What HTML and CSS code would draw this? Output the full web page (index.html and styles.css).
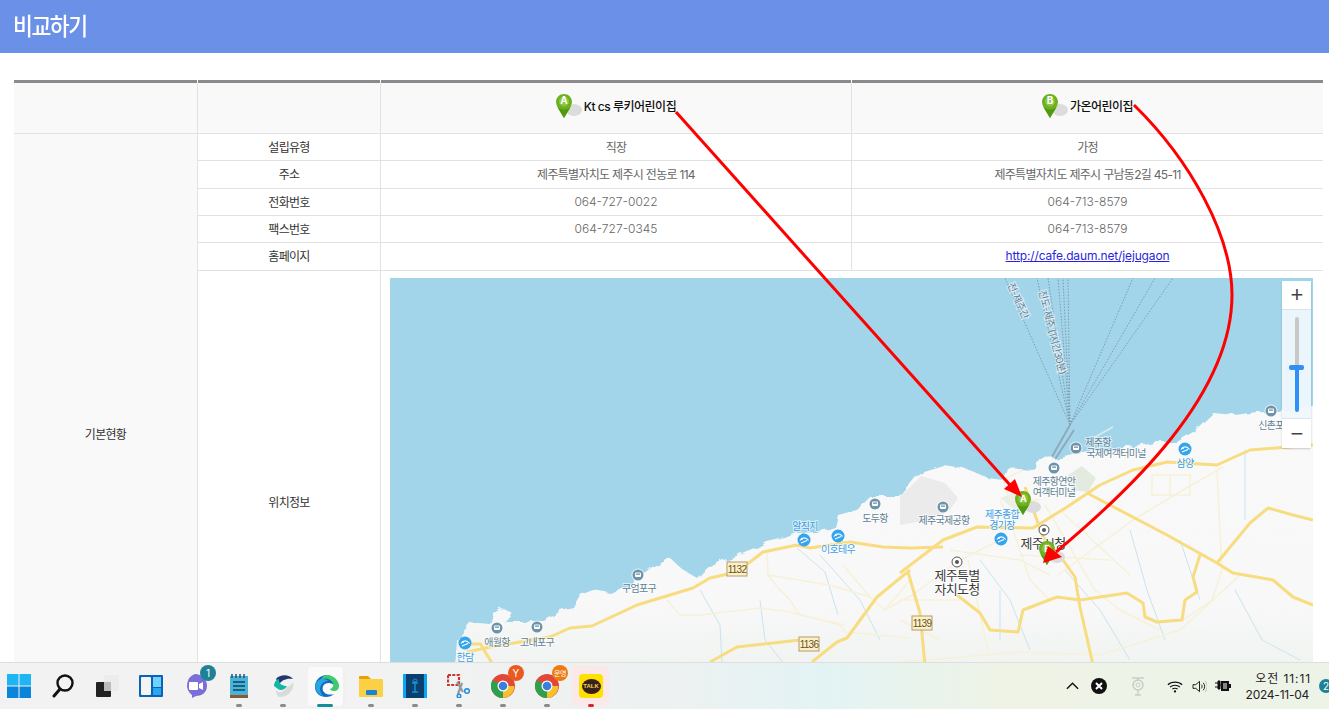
FILE: index.html
```html
<!DOCTYPE html>
<html lang="ko">
<head>
<meta charset="utf-8">
<title>비교하기</title>
<link rel="stylesheet" href="styles.css">
</head>
<body>
<svg class="defs" width="0" height="0" aria-hidden="true">
  <defs>
    <symbol id="pin" viewBox="0 0 26 24">
      <ellipse cx="18" cy="16" rx="8" ry="6" fill="#dcdcdc"/>
      <path d="M8 0C3.6 0 0 3.4 0 7.8 0 12.500 5 19 8 24c3-5 8-11.500 8-16.200C16 3.400 12.400 0 8 0z" fill="#6fb01f"/>
      <path d="M8 24C6 20 3.500 17 2 13.500 6 16 10 16 14 13.500 12.500 17 10 20 8 24z" fill="#4f9a12"/>
      <circle cx="8" cy="7.500" r="5" fill="#8cc63f"/>
    </symbol>
    <symbol id="chrome" viewBox="0 0 24 24">
      <circle cx="12" cy="12" r="12" fill="#e2483a"/>
      <path d="M12 12 1.600 6A12 12 0 0 0 12 24l5-8z" fill="#2f9e4d"/>
      <path d="M12 12h11.400A12 12 0 0 1 12 24z" fill="#f5c22e"/>
      <circle cx="12" cy="12" r="5.500" fill="#fff"/>
      <circle cx="12" cy="12" r="4.300" fill="#3a7fe0"/>
    </symbol>
    <symbol id="harbor" viewBox="0 0 14 14">
      <circle cx="7" cy="7" r="6.500" fill="#fff" opacity=".7"/>
      <circle cx="7" cy="7" r="5.500" fill="#6f93a8"/>
      <rect x="4" y="4.500" width="6" height="4.500" rx="1" fill="#fff"/>
      <rect x="5" y="5.500" width="4" height="1.300" fill="#6f93a8"/>
    </symbol>
    <symbol id="beach" viewBox="0 0 14 14">
      <circle cx="7" cy="7" r="6.500" fill="#35a4ee"/>
      <path d="M3 7.500C5 4 9 4 11.500 7.500M4 10l6-2.500" stroke="#fff" stroke-width="1.200" fill="none"/>
      <circle cx="5" cy="6" r="1" fill="#fff"/>
    </symbol>
    <symbol id="target" viewBox="0 0 12 12">
      <circle cx="6" cy="6" r="5" fill="#fff" stroke="#555"/>
      <circle cx="6" cy="6" r="2" fill="#555"/>
    </symbol>
  </defs>
</svg>

<header class="title-bar"><h1 class="title">비교하기</h1></header>

<main class="content">
  <table class="compare">
    <colgroup>
      <col class="col-group"><col class="col-label"><col class="col-a"><col class="col-b">
    </colgroup>
    <thead>
      <tr>
        <th></th>
        <th></th>
        <th><span class="kinder"><svg class="pin-icon"><use href="#pin"/></svg><span class="pin-letter pin-letter-a">A</span>Kt cs 루키어린이집</span></th>
        <th><span class="kinder"><svg class="pin-icon"><use href="#pin"/></svg><span class="pin-letter pin-letter-a">B</span>가온어린이집</span></th>
      </tr>
    </thead>
    <tbody>
      <tr class="row-a">
        <td class="group" rowspan="6">기본현황</td>
        <td class="label">설립유형</td>
        <td>직장</td>
        <td>가정</td>
      </tr>
      <tr class="row-b">
        <td class="label">주소</td>
        <td>제주특별자치도 제주시 전농로 114</td>
        <td>제주특별자치도 제주시 구남동2길 45-11</td>
      </tr>
      <tr class="row-a">
        <td class="label">전화번호</td>
        <td class="num">064-727-0022</td>
        <td class="num">064-713-8579</td>
      </tr>
      <tr class="row-a">
        <td class="label">팩스번호</td>
        <td class="num">064-727-0345</td>
        <td class="num">064-713-8579</td>
      </tr>
      <tr class="row-b">
        <td class="label">홈페이지</td>
        <td></td>
        <td><a class="link" href="#">http://cafe.daum.net/jejugaon</a></td>
      </tr>
      <tr>
        <td class="label label-map">위치정보</td>
        <td class="map-cell" colspan="2">
          <div class="map">
            <svg class="map-canvas" viewBox="390 278 923 450" width="923" height="450">
              <defs>
                <linearGradient id="land" x1="0" y1="0" x2="0" y2="1">
                  <stop offset="0" stop-color="#f9f9f9"/>
                  <stop offset=".6" stop-color="#f8f8f8"/>
                  <stop offset=".85" stop-color="#edf2ee"/>
                </linearGradient>
                <filter id="crinkle" x="-2%" y="-2%" width="104%" height="104%">
                  <feTurbulence type="fractalNoise" baseFrequency=".09" numOctaves="2" seed="4"/>
                  <feDisplacementMap in="SourceGraphic" scale="7"/>
                </filter>
              </defs>
              <rect x="390" y="278" width="923" height="450" fill="#a3d5ea"/>
              <g class="ferry">
                <path d="M1070 425 1005 278M1070 425 1037 278M1070 425 1048 278M1070 425 1058 278M1070 425 1063 278M1070 425 1068 278M1070 425 1133 278M1070 425 1155 278M1070 425 1173 278"/>
              </g>
              <path class="pier" d="M1070 425 1049 462M1074 430 1052 464"/>
              <path class="pier-lite" d="M1095 437 1113 427M1048 462 1042 470"/>
              <path fill="url(#land)" filter="url(#crinkle)" d="M450 740 457 640 470 623 490 625 493 613 503 608 512 613 504 622 523 622 543 620 560 610 573 607 580 595 593 590 610 593 633 583 653 568 670 558 683 570 697 578 705 570 723 560 740 555 753 550 767 542 785 538 797 533 817 532 835 527 838 515 857 510 870 497 900 497 920 472 943 465 963 468 987 478 1003 480 1007 468 1033 470 1040 458 1060 457 1080 452 1113 450 1153 442 1177 442 1193 432 1213 413 1235 415 1257 412 1280 413 1330 402V740z"/>
              <path fill="#ebebeb" d="M900 497 921 476 945 483 958 498 950 510 930 520 900 525z"/>
              <path fill="#e3ebe0" d="M1068 475 1082 466 1096 478 1088 492 1072 490z"/>
              <path fill="#e9eee6" d="M1000 498 1016 492 1036 505 1020 514z"/>
              <g class="rivers">
                <path d="M797 548 825 572 838 615M760 600 765 640 785 665M700 590 720 625 722 662M1130 530 1147 590 1165 640M1065 570 1100 610 1130 660M980 560 1010 600 1030 650M1000 590 1000 640M820 555 860 600 880 640M1180 540 1200 600M1235 590 1262 640 1300 660M1245 450V520"/>
              </g>
              <g class="minor">
                <path d="M667 600 680 615 700 615 760 608 790 612 840 625 845 632 910 638M767 552 768 575 780 590 790 600 800 615 845 625M768 575 830 585 870 597M843 565 870 597 885 610 910 580M900 620 940 640M885 610 912 595 960 560 1000 540M1000 500 1010 520 1030 580 1050 600M1045 505 1095 590 1120 610 1160 630M1058 575 1133 520 1183 490 1223 467M1020 555 1110 560M900 662 1020 652 1100 655 1180 630 1240 575M950 550 1020 560 1050 575M900 600 960 600M1023 470 1003 480 1010 500 1040 500M1217 470 1222 570 1212 600 1183 620M968 560 990 660M1152 475H1190V495H1152zM1170 475V495M1060 510 1130 575"/>
              </g>
              <g class="major">
                <path d="M467 652 490 647 520 642 550 637 570 628 592 626 637 605 693 588 710 578 737 572 763 552 797 545 810 548 850 542 883 547 910 548 943 547"/>
                <path d="M900 573 943 540 977 527 1033 528 1067 507 1100 485 1133 470 1167 462 1217 465 1250 450 1313 445"/>
                <path d="M1087 493 1167 535 1217 563 1233 573 1273 580 1293 597 1313 605"/>
                <path d="M1217 563 1250 523 1268 508 1293 515 1313 520"/>
                <path d="M1200 555 1193 577 1197 592 1185 600 1182 620 1157 622 1145 617 1143 603 1127 593 1080 600 1057 597 1023 610 1018 632 990 630 980 613 957 595"/>
                <path d="M908 572 920 613 925 665"/>
                <path d="M1025 487 1043 537 1063 560 1075 577 1080 607 1093 665"/>
                <path d="M710 662 737 647 800 640M812 662 837 642 847 638 877 597 910 570"/>
                <path d="M481 645 495 668M482 644H470"/>
              </g>
              <g class="badges">
                <g><rect x="727" y="562" width="20" height="14"/><text x="737" y="573">1132</text></g>
                <g><rect x="799" y="637" width="20" height="14"/><text x="809" y="648">1136</text></g>
                <g><rect x="912" y="616" width="20" height="14"/><text x="922" y="627">1139</text></g>
              </g>
              <use href="#harbor" x="631" y="568" width="14" height="14"/>
              <use href="#harbor" x="868" y="497" width="14" height="14"/>
              <use href="#harbor" x="530" y="620" width="14" height="14"/>
              <use href="#harbor" x="490" y="621" width="14" height="14"/>
              <use href="#harbor" x="1069" y="441" width="14" height="14"/>
              <use href="#harbor" x="1047" y="461" width="14" height="14"/>
              <use href="#harbor" x="1264" y="404" width="14" height="14"/>
              <use href="#harbor" x="936" y="500" width="14" height="14"/>
              <use href="#beach" x="458" y="636" width="14" height="14"/>
              <use href="#beach" x="797" y="533" width="14" height="14"/>
              <use href="#beach" x="831" y="529" width="14" height="14"/>
              <use href="#beach" x="1178" y="442" width="14" height="14"/>
              <use href="#beach" x="994" y="532" width="14" height="14"/>
              <use href="#target" x="1038" y="524" width="12" height="12"/>
              <use href="#target" x="951" y="556" width="12" height="12"/>
              <g class="lab lab-gray">
                <text x="639" y="592">구엄포구</text>
                <text x="875" y="522">도두항</text>
                <text x="497" y="646">애월항</text>
                <text x="537" y="646">고내포구</text>
                <text x="1098" y="446">제주항</text>
                <text x="1116" y="457">국제여객터미널</text>
                <text x="1054" y="485">제주항연안</text>
                <text x="1054" y="496">여객터미널</text>
                <text x="944" y="524">제주국제공항</text>
                <text x="1271" y="429">신촌포</text>
                <text transform="translate(1015 302) rotate(66)">전-제주간</text>
                <text transform="translate(1049 333) rotate(76)">진도-제주 (1시간30분)</text>
              </g>
              <g class="lab lab-blue">
                <text x="465" y="661">한담</text>
                <text x="805" y="530">알직지</text>
                <text x="838" y="553">이호테우</text>
                <text x="1185" y="467">삼양</text>
                <text x="1002" y="518">제주종합</text>
                <text x="1002" y="529">경기장</text>
              </g>
              <g class="lab lab-big">
                <text x="1043" y="548">제주시청</text>
                <text x="957" y="580">제주특별</text>
                <text x="957" y="594">자치도청</text>
              </g>
              <use href="#pin" x="1015" y="491" width="26" height="24"/>
              <use href="#pin" x="1039" y="541" width="26" height="24"/>
              <text class="pin-map-letter" x="1023" y="502">A</text>
              <text class="pin-map-letter" x="1047" y="552">B</text>
            </svg>
            <div class="zoom-ctrl">
              <div class="zoom-btn zoom-plus">+</div>
              <div class="zoom-slider">
                <div class="track-off"></div>
                <div class="thumb"></div>
                <div class="track-on"></div>
              </div>
              <div class="zoom-btn zoom-minus">−</div>
            </div>
          </div>
        </td>
      </tr>
    </tbody>
  </table>
</main>

<svg class="arrows" viewBox="0 0 1329 709" width="1329" height="709" aria-hidden="true">
  <path class="arrow-line" d="M676 112 1010 485"/>
  <path class="arrow-head" d="M1022 497 1004 489 1015 479z"/>
  <path class="arrow-line" d="M1134 105C1190 160 1232 235 1232 295 1232 395 1130 490 1056 552"/>
  <path class="arrow-head" d="M1043 563 1048 546 1062 557z"/>
</svg>

<footer class="taskbar">
  <div class="tb-apps">
    <div class="tb-item">
      <svg class="tb-icon" viewBox="0 0 24 24"><path fill="#1fb4f3" d="M0 0h11.500v11.500H0zM12.500 0H24v11.500H12.500z"/><path fill="#0b84dc" d="M0 12.500h11.500V24H0zM12.500 12.500H24V24H12.500z"/></svg>
    </div>
    <div class="tb-item">
      <svg class="tb-icon" viewBox="0 0 24 24"><circle cx="14" cy="9" r="7.500" fill="none" stroke="#111" stroke-width="2.400"/><path d="M9 15 3 22" stroke="#111" stroke-width="3" stroke-linecap="round"/></svg>
    </div>
    <div class="tb-item">
      <svg class="tb-icon" viewBox="0 0 24 24"><rect x="9" y="1" width="15" height="16" rx="1" fill="#ececec"/><rect x="1" y="8" width="15" height="15" rx="1" fill="#222"/><rect x="9" y="8" width="7" height="9" fill="#bbb"/></svg>
    </div>
    <div class="tb-item">
      <svg class="tb-icon" viewBox="0 0 24 24"><rect x="0" y="1" width="24" height="22" rx="1" fill="#0b63b8"/><rect x="2" y="3" width="10" height="18" rx="1" fill="#f4f4f4"/><rect x="14" y="3" width="8" height="10" fill="#6fd3fb"/><rect x="14" y="14" width="8" height="7" fill="#2ba7ee"/></svg>
    </div>
    <div class="tb-item">
      <svg class="tb-icon" viewBox="0 0 24 24"><path fill="#7a6fd8" d="M12 0a12 12 0 0 1 12 12c0 7-6 10-11 10l-4 2v-3A12 12 0 0 1 12 0z"/><rect x="6" y="8" width="9" height="8" rx="1" fill="#fff"/><path d="M16 10l4-2v8l-4-2z" fill="#fff"/></svg>
      <span class="badge badge-teal">1</span>
    </div>
    <div class="tb-item">
      <svg class="tb-icon" viewBox="0 0 24 24"><rect x="3" y="2" width="18" height="20" fill="#4bb2d8"/><rect x="3" y="21" width="18" height="3" fill="#8a5a34"/><path d="M5 0v4M9 0v4M13 0v4M17 0v4" stroke="#24506c" stroke-width="1.500"/><path d="M6 8h12M6 12h12M6 16h12" stroke="#17607f" stroke-width="2"/></svg>
    </div>
    <div class="tb-item">
      <svg class="tb-icon" viewBox="0 0 24 24"><path fill="#24366f" d="M5 5C9 0 18 0 22 5 16 4 10 6 8 11z"/><path fill="#11b8a6" d="M3 12c0-4 3-7 5-7 0 5 3 7 8 7-2 4-7 5-9 3z"/><path fill="#d7dbdc" d="M5 16c3 4 8 2 11-3 3-1 5-3 6-5 2 8-6 16-14 15-2-1-3-4-3-7z"/></svg>
    </div>
    <div class="tb-item tb-active">
      <svg class="tb-icon" viewBox="0 0 24 24"><path fill="#0f6cc0" d="M12 1C5 1 0 6 0 13c0 6 5 10 11 10 3 0 6-1 8-3-3 1-8 1-10-2-2-2-2-6 1-8 3-2 7-1 9 1 1-6-3-10-7-10z"/><path fill="#3ecb6e" d="M12 1c6 0 12 5 12 11 0 3-2 5-5 5-2 0-4-1-4-2 3-1 4-4 3-6-2-4-8-6-12-3 1-3 3-5 6-5z"/><path fill="#27a7e0" d="M1 9c2-3 5-5 8-4 2 0 3 1 4 2-4 0-7 3-8 7 0 3 1 6 3 8-6-2-9-8-7-13z"/></svg>
    </div>
    <div class="tb-item">
      <svg class="tb-icon" viewBox="0 0 24 24"><path fill="#e9a100" d="M0 3a1 1 0 0 1 1-1h8l3 3h-12z"/><rect y="5" width="24" height="18" rx="1" fill="#fbd044"/><rect x="7" y="16" width="11" height="5" rx="1" fill="#1a82d9"/></svg>
    </div>
    <div class="tb-item">
      <svg class="tb-icon" viewBox="0 0 24 24"><rect x="0" y="0" width="24" height="24" fill="#0aa6f5"/><rect x="3" y="0" width="18" height="24" fill="#0a3f6e"/><path d="M12 7v11M9 18h6M9 9h6" stroke="#1d8fd0" stroke-width="1.500"/><circle cx="12" cy="7" r="2" fill="none" stroke="#1d8fd0"/></svg>
    </div>
    <div class="tb-item">
      <svg class="tb-icon" viewBox="0 0 24 24"><rect x="1" y="1" width="11" height="10" fill="none" stroke="#c9372c" stroke-width="2.200" stroke-dasharray="3 1.300"/><path d="M10 8l6 10M15 9 11 20" stroke="#8f9aa3" stroke-width="2.200"/><circle cx="20" cy="17" r="2.300" fill="none" stroke="#1d8fdc" stroke-width="1.500"/><circle cx="12" cy="22" r="1.800" fill="none" stroke="#1d8fdc" stroke-width="1.500"/></svg>
    </div>
    <div class="tb-item">
      <svg class="tb-icon"><use href="#chrome"/></svg>
      <span class="badge badge-orange">Y</span>
    </div>
    <div class="tb-item">
      <svg class="tb-icon"><use href="#chrome"/></svg>
      <span class="badge badge-orange badge-small">운영</span>
    </div>
    <div class="tb-item tb-alert">
      <span class="kakao"><span class="kakao-bubble">TALK</span></span>
    </div>
  </div>
  <div class="tb-tray">
    <svg class="tray-chevron" viewBox="0 0 14 8"><path d="M1 7 7 1l6 6" fill="none" stroke="#111" stroke-width="1.500"/></svg>
    <svg class="tray-close" viewBox="0 0 16 16"><circle cx="8" cy="8" r="8" fill="#111"/><path d="M5 5l6 6M11 5l-6 6" stroke="#fff" stroke-width="2"/></svg>
    <svg class="tray-key" viewBox="0 0 16 20"><path d="M2 2h12M8 2v3M8 14v5M5 19h6" stroke="#c5cec8" stroke-width="1.300" fill="none"/><circle cx="8" cy="9" r="5" fill="none" stroke="#c5cec8" stroke-width="1.500"/><circle cx="8" cy="9" r="2" fill="none" stroke="#c5cec8"/></svg>
    <svg class="tray-wifi" viewBox="0 0 18 14"><path d="M1 5c4-4 12-4 16 0M3.500 7.500c3-2.500 8-2.500 11 0M6 10c1.500-1.200 4.500-1.200 6 0" fill="none" stroke="#111" stroke-width="1.300"/><circle cx="9" cy="12.500" r="1.300" fill="#111"/></svg>
    <svg class="tray-vol" viewBox="0 0 16 14"><path d="M1 5h3l4-3.500v11L4 9H1z" fill="none" stroke="#111"/><path d="M10 5c1 1 1 3 0 4M12 3c2 2 2 6 0 8" fill="none" stroke="#111"/><path d="M14 1c3 3 3 9 0 12" fill="none" stroke="#bbb"/></svg>
    <svg class="tray-bat" viewBox="0 0 16 12"><path d="M0 3h3M0 7h3M3 1h2v8H3zM5 5h2" stroke="#111" fill="#111"/><rect x="6" y="1" width="8" height="10" fill="#111"/><rect x="8" y="3" width="4" height="6" fill="#888"/><rect x="14" y="4" width="2" height="4" fill="#111"/></svg>
    <div class="clock">
      <span class="clock-time">오전 11:11</span>
      <span class="clock-date">2024-11-04</span>
    </div>
    <span class="notif">2</span>
  </div>
</footer>
</body>
</html>
```

FILE: styles.css
```css
* {
  box-sizing: border-box;
}

html,
body {
  margin: 0;
  height: 709px;
  overflow: hidden;
  background: #fff;
}

body {
  position: relative;
  font-family: Inter, "Noto Sans CJK KR", sans-serif;
  font-size: 12px;
  color: #666;
}

.defs {
  position: absolute;
}

.title-bar {
  height: 53px;
  background: #6a90e8;
  display: flex;
  align-items: center;
  padding-left: 13px;
}

.title {
  margin: 0 0 4px;
  font-size: 24px;
  font-weight: 500;
  letter-spacing: -1.6px;
  color: #fff;
  transform: scaleX(.9);
  transform-origin: left center;
}

.content {
  padding: 27px 0 0 14px;
}

.compare {
  width: 1309px;
  table-layout: fixed;
  border-collapse: separate;
  border-spacing: 0;
}

.col-group { width: 184px; }
.col-label { width: 183px; }
.col-a { width: 471px; }
.col-b { width: 471px; }

.compare th {
  position: relative;
  height: 54px;
  padding: 0;
  background: #f9f9f9;
  border-top: 3px solid #8b8b8f;
  border-right: 1px solid #e2e2e2;
  border-bottom: 1px solid #e2e2e2;
  font-weight: 500;
  color: #111;
  letter-spacing: -.5px;
}

.compare th::after {
  content: "";
  position: absolute;
  top: -3px;
  right: -1px;
  width: 1px;
  height: 3px;
  background: #fff;
}

.compare th:last-child,
.compare td:last-child {
  border-right: 0;
}

.compare td {
  padding: 0 0 2px;
  text-align: center;
  border-right: 1px solid #e2e2e2;
  border-bottom: 1px solid #e2e2e2;
  vertical-align: middle;
  letter-spacing: -.7px;
}

.compare td.num {
  letter-spacing: 0;
  font-weight: 300;
}

.row-a td { height: 27px; }
.row-b td { height: 28px; }

.compare td.group {
  background: #f9f9f9;
  color: #333;
}

.compare td.label {
  color: #333;
}

.kinder {
  position: relative;
  display: inline-flex;
  align-items: center;
  gap: 2px;
  top: -1px;
}

.pin-icon {
  width: 26px;
  height: 24px;
}

.pin-letter {
  position: absolute;
  left: 0;
  top: 50%;
  width: 16px;
  margin-top: -12px;
  text-align: center;
  font-size: 10px;
  font-weight: 700;
  color: #fff;
}

.link {
  color: #2a1fe0;
  text-decoration: underline;
  letter-spacing: -.15px;
}

.compare td.map-cell {
  padding: 7px 10px 7px 9px;
  border-bottom: 0;
}

.map {
  position: relative;
  width: 923px;
  height: 450px;
  overflow: hidden;
}

.map-canvas {
  display: block;
}

.ferry path {
  fill: none;
  stroke: #7f9bb0;
  stroke-width: 1;
  stroke-dasharray: 1.500 1.500;
}

.pier {
  fill: none;
  stroke: #8fa9bd;
  stroke-width: 2;
}

.pier-lite {
  fill: none;
  stroke: #d7ebf3;
  stroke-width: 1.500;
}

.rivers path {
  fill: none;
  stroke: #c9e4f1;
  stroke-width: 1;
}

.minor path {
  fill: none;
  stroke: #f6f1d8;
  stroke-width: 1.500;
}

.major path {
  fill: none;
  stroke: #f8dc80;
  stroke-width: 3;
  stroke-linejoin: round;
}

.badges rect {
  fill: #fbf1c9;
  stroke: #b89a68;
}

.badges text {
  font-family: "Liberation Sans", sans-serif;
  font-size: 10px;
  fill: #6a5226;
  text-anchor: middle;
}

.lab text {
  text-anchor: middle;
  paint-order: stroke;
  stroke: #fff;
  stroke-width: 2px;
  stroke-opacity: .6;
  font-size: 10px;
}

.lab-gray text { fill: #5e7f94; }
.lab-blue text { fill: #3a9ee6; }

.lab-big text {
  fill: #3b3b3b;
  font-size: 13px;
  stroke-opacity: .9;
}

.pin-map-letter {
  text-anchor: middle;
  font-size: 9px;
  font-weight: 700;
  fill: #fff;
}

.zoom-ctrl {
  position: absolute;
  top: 3px;
  right: 2px;
  width: 29px;
  display: flex;
  flex-direction: column;
  box-shadow: 0 1px 2px rgba(0, 0, 0, .2);
  border-radius: 2px;
}

.zoom-btn {
  height: 28px;
  background: #fff;
  display: flex;
  align-items: center;
  justify-content: center;
  font-family: "Liberation Sans", sans-serif;
  font-size: 22px;
  color: #444;
}

.zoom-minus {
  height: 29px;
}

.zoom-slider {
  height: 110px;
  padding: 7px 0 6px;
  background: rgba(240, 248, 253, .93);
  border-top: 1px solid #dde5ea;
  border-bottom: 1px solid #dde5ea;
  display: flex;
  flex-direction: column;
  align-items: center;
}

.track-off {
  width: 4px;
  height: 49px;
  background: #c8c8c8;
  border-radius: 2px 2px 0 0;
}

.thumb {
  width: 15px;
  height: 5px;
  background: #3090f5;
  border-radius: 2px;
}

.track-on {
  width: 4px;
  height: 43px;
  background: #3090f5;
  border-radius: 0 0 2px 2px;
}

.arrows {
  position: absolute;
  top: 0;
  left: 0;
  pointer-events: none;
}

.arrow-line {
  fill: none;
  stroke: #f00;
  stroke-width: 3;
}

.arrow-head {
  fill: #f00;
}

.taskbar {
  position: absolute;
  left: 0;
  right: 0;
  bottom: 0;
  height: 47px;
  display: flex;
  justify-content: space-between;
  background: linear-gradient(90deg, #f2f2f2 0%, #f2f2f2 25%, #eef1f1 50%, #e3f3f4 62%, #eef3e6 75%, #eef3e8 100%);
  border-top: 1px solid #dedede;
}

.tb-apps {
  display: flex;
  margin-left: -3px;
}

.tb-item {
  position: relative;
  width: 44px;
  display: flex;
  align-items: center;
  justify-content: center;
}

.tb-item:nth-child(n+6)::after {
  content: "";
  position: absolute;
  left: 19px;
  bottom: 2px;
  width: 6px;
  height: 3px;
  border-radius: 2px;
  background: #8a8a8a;
}

.tb-item.tb-active::after {
  left: 12px;
  width: 16px;
  background: #138c9c;
}

.tb-item.tb-alert::after {
  background: #d6262a;
}

.tb-active::before {
  content: "";
  position: absolute;
  left: 3px;
  top: 4px;
  width: 35px;
  height: 39px;
  border-radius: 4px;
  background: #fafafa;
  box-shadow: 2px 0 0 #f0f0f0;
}

.tb-alert::before {
  content: "";
  position: absolute;
  left: 3px;
  top: 2px;
  width: 37px;
  height: 41px;
  border-radius: 4px;
  background: #fbe9ea;
}

.tb-icon {
  position: relative;
  width: 24px;
  height: 24px;
}

.badge {
  position: absolute;
  top: 2px;
  right: 1px;
  width: 16px;
  height: 16px;
  border-radius: 50%;
  display: flex;
  align-items: center;
  justify-content: center;
  font-size: 10px;
  color: #fff;
}

.badge-teal { background: #1f8196; }
.badge-orange { background: #ea5a1e; }

.badge-small {
  background: #ee7a12;
  font-size: 7px;
  letter-spacing: -.5px;
}

.kakao {
  position: relative;
  width: 24px;
  height: 24px;
  border-radius: 4px;
  background: #ffe100;
  display: flex;
  align-items: center;
  justify-content: center;
}

.kakao-bubble {
  width: 19px;
  height: 15px;
  border-radius: 50%;
  background: #3a1f1a;
  color: #f3d65a;
  font: 700 6px/15px "Liberation Sans", sans-serif;
  text-align: center;
}

.tb-tray {
  display: flex;
  align-items: center;
  color: #222;
}

.tray-chevron {
  width: 13px;
  height: 8px;
  margin-right: 12px;
}

.tray-close {
  width: 16px;
  height: 16px;
  margin-right: 23px;
}

.tray-key {
  width: 16px;
  height: 20px;
  margin-right: 21px;
}

.tray-wifi {
  width: 16px;
  height: 13px;
  margin-right: 9px;
}

.tray-vol {
  width: 15px;
  height: 13px;
  margin-right: 8px;
}

.tray-bat {
  width: 16px;
  height: 12px;
}

.clock {
  display: flex;
  flex-direction: column;
  align-items: flex-end;
  gap: 1px;
  width: 80px;
  margin-right: 1px;
  font-size: 12px;
  line-height: 15px;
  color: #222;
}

.clock-time {
  letter-spacing: .9px;
}

.clock-date {
  letter-spacing: -.25px;
  margin-right: 2px;
}

.notif {
  width: 14px;
  height: 14px;
  margin-left: 7px;
  margin-right: -4px;
  border-radius: 50%;
  background: #1f8196;
  color: #fff;
  font-size: 10px;
  line-height: 14px;
  text-align: center;
}
```
